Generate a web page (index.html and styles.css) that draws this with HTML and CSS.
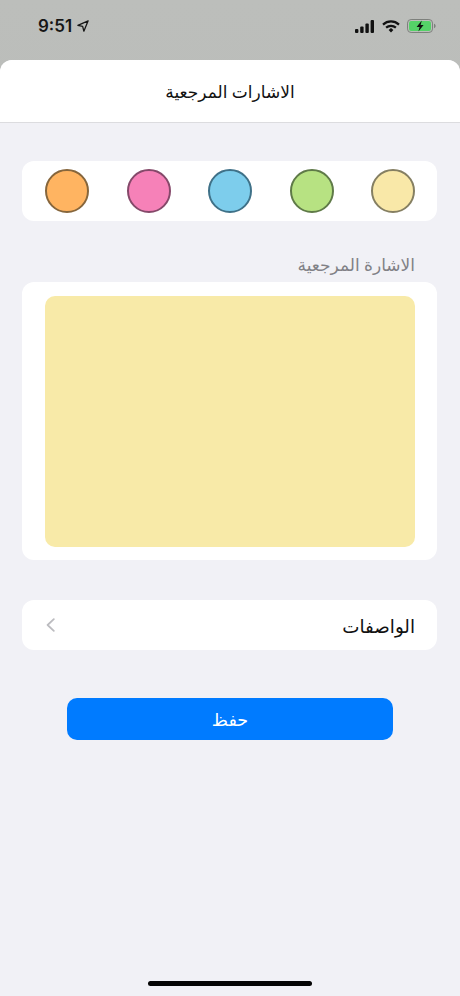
FILE: index.html
```html
<!DOCTYPE html>
<html lang="ar">
<head>
<meta charset="utf-8">
<title>الاشارات المرجعية</title>
<link rel="stylesheet" href="styles.css">
</head>
<body>
<div class="phone">
  <div class="status">
    <div class="time-wrap">
      <span class="time">9:51</span>
      <svg class="loc" viewBox="0 0 14 14"><path d="M13 1 L1 6.2 L6.6 7.4 L8 13 Z" fill="none" stroke="#161616" stroke-width="1.5" stroke-linejoin="round"/></svg>
    </div>
    <div class="status-icons">
      <svg class="signal" viewBox="0 0 20 13"><rect x="0" y="9" width="3.4" height="4" rx="1"/><rect x="5.2" y="6.4" width="3.4" height="6.6" rx="1"/><rect x="10.4" y="3.4" width="3.4" height="9.6" rx="1"/><rect x="15.6" y="0" width="3.4" height="13" rx="1"/></svg>
      <svg class="wifi" viewBox="0 0 18 13"><path d="M1 4.6 C5.6 0.4 12.4 0.4 17 4.6" fill="none" stroke="#111" stroke-width="2.2"/><path d="M4.1 7.6 C6.9 5.2 11.1 5.2 13.9 7.6" fill="none" stroke="#111" stroke-width="2.2"/><path d="M6.6 10 L9 7.9 L11.4 10 L9 12.6 Z" fill="#111"/></svg>
      <svg class="battery" viewBox="0 0 29 14"><rect x="0.5" y="0.5" width="25" height="13" rx="3.6" fill="none" stroke="#7d807c"/><rect x="2" y="2" width="22" height="10" rx="2.2" fill="#55d268"/><path d="M27 4.8 C28.2 5.2 28.6 6 28.6 7 C28.6 8 28.2 8.8 27 9.2 Z" fill="#7d807c"/><path d="M14.8 1.6 L9.6 8 L12.6 8 L11.4 12.4 L16.6 6 L13.6 6 Z" fill="#111"/></svg>
    </div>
  </div>
  <div class="sheet">
    <header class="nav"><h1 class="nav-title">الاشارات المرجعية</h1></header>
    <main class="content" dir="rtl">
      <section class="card swatches">
        <span class="swatch swatch-yellow"></span>
        <span class="swatch swatch-green"></span>
        <span class="swatch swatch-blue"></span>
        <span class="swatch swatch-pink"></span>
        <span class="swatch swatch-orange"></span>
      </section>
      <div class="section-label">الاشارة المرجعية</div>
      <section class="card preview-card"><div class="preview"></div></section>
      <section class="card row">
        <span class="row-label">الواصفات</span>
        <svg class="chevron" viewBox="0 0 9 14"><path d="M7.8 1.2 L1.6 7 L7.8 12.8" fill="none" stroke="#bcbcc0" stroke-width="1.8" stroke-linecap="round" stroke-linejoin="round"/></svg>
      </section>
      <button class="save" type="button">حفظ</button>
    </main>
    <div class="home-wrap"><div class="home"></div></div>
  </div>
</div>
</body>
</html>
```
FILE: styles.css
```css
* { box-sizing: border-box; }
html, body { margin: 0; padding: 0; }
body { width: 460px; height: 996px; overflow: hidden; font-family: "Noto Sans", "DejaVu Sans", sans-serif; }
.phone { width: 460px; height: 996px; display: flex; flex-direction: column; background: linear-gradient(#bcbebb, #b3b5b2); }
.status { height: 60px; flex: none; display: flex; justify-content: space-between; align-items: flex-start; padding: 16px 24px 0 38px; }
.time-wrap { display: flex; align-items: center; gap: 5px; height: 20px; }
.time { font-family: Inter, "Liberation Sans", sans-serif; font-size: 17px; font-weight: 600; color: #161616; line-height: 20px; }
.loc { width: 12px; height: 12px; }
.status-icons { display: flex; align-items: center; gap: 7px; height: 20px; }
.signal { width: 20px; height: 13px; fill: #111; }
.wifi { width: 18px; height: 13px; }
.battery { width: 29px; height: 14px; }
.sheet { flex: 1; display: flex; flex-direction: column; background: #f1f1f6; border-radius: 12px 12px 0 0; overflow: hidden; }
.nav { height: 63px; flex: none; background: #fff; border-bottom: 1px solid #dcdcdf; display: flex; align-items: center; justify-content: center; padding-top: 1px; }
.nav-title { margin: 0; font-size: 17px; font-weight: 400; color: #111; }
.content { flex: 1; display: flex; flex-direction: column; padding: 38px 23px 0 22px; }
.card { background: #fff; border-radius: 12px; }
.swatches { height: 60px; display: flex; align-items: center; justify-content: space-between; padding: 0 22px 0 23px; }
.swatch { width: 44px; height: 44px; border-radius: 50%; border: 2px solid; flex: none; }
.swatch-yellow { background: #f9e8a8; border-color: #857f62; }
.swatch-green { background: #b7e282; border-color: #5f7a48; }
.swatch-blue { background: #7dcdec; border-color: #3f7188; }
.swatch-pink { background: #f681b8; border-color: #85496a; }
.swatch-orange { background: #ffb461; border-color: #86663c; }
.section-label { height: 61px; padding: 32px 22px 0 0; font-size: 17px; line-height: 24px; color: #818186; }
.preview-card { height: 278px; padding: 14px 22px 13px 23px; }
.preview { height: 100%; background: #f8eaa8; border-radius: 10px; }
.row { height: 50px; margin-top: 40px; display: flex; align-items: center; justify-content: space-between; padding: 0 22px 0 24px; }
.row-label { font-size: 18.3px; color: #111; }
.chevron { width: 9px; height: 14px; }
.save { display: block; width: 326px; height: 42px; margin: 48px 44px 0; padding: 0; border: 0; border-radius: 10px; background: #007bff; color: #fff; font-family: inherit; font-size: 17.5px; }
.home-wrap { height: 15px; flex: none; }
.home { width: 164px; height: 5px; margin: 0 auto; border-radius: 3px; background: #050505; }
```
